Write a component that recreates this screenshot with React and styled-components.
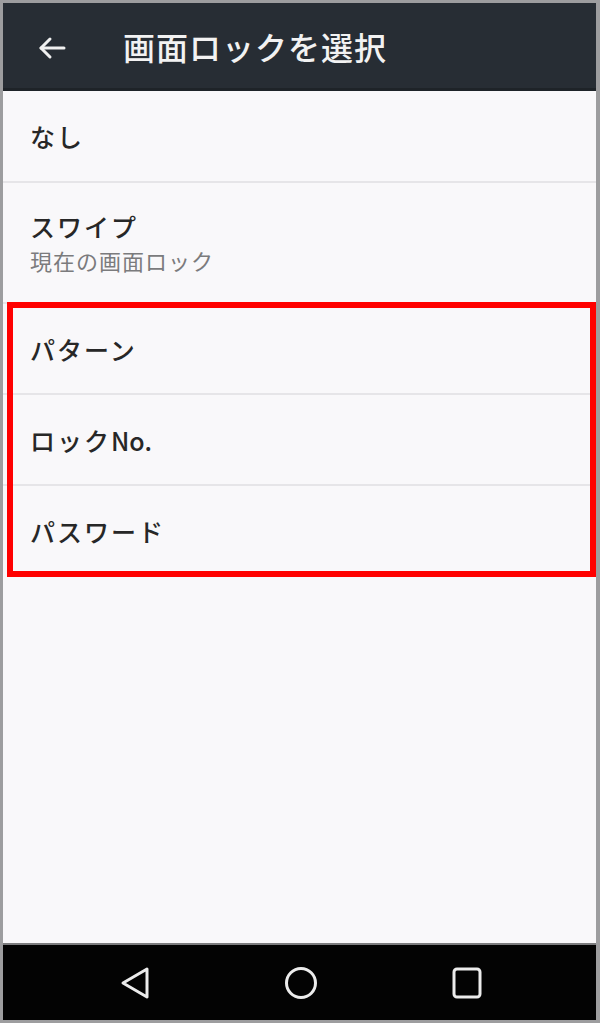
import React from 'react';
import styled, { createGlobalStyle } from 'styled-components';

const GlobalStyle = createGlobalStyle`
  html, body {
    margin: 0;
    padding: 0;
    background: #9d9d9f;
  }
  * {
    box-sizing: border-box;
  }
`;

const Screen = styled.div`
  width: 600px;
  height: 1023px;
  padding: 3px 4px 3px 3px;
  background: #9d9d9f;
  display: flex;
  flex-direction: column;
  font-family: "Noto Sans CJK JP", "Noto Sans", sans-serif;
`;

const Header = styled.header`
  height: 88px;
  flex-shrink: 0;
  background: #272d34;
  border-bottom: 3px solid #1e2328;
  display: flex;
  align-items: center;
  padding-left: 34px;
`;

const BackButton = styled.span`
  display: flex;
  width: 30px;
  height: 24px;
  margin-top: 4px;
`;

const Title = styled.h1`
  margin: 0 0 0 56px;
  font-size: 32px;
  font-weight: 500;
  letter-spacing: 1px;
  color: #f2f2f2;
  line-height: 1;
`;

const List = styled.main`
  flex: 1;
  background: #f9f8fa;
  display: flex;
  flex-direction: column;
`;

const Row = styled.div`
  height: ${(props) => props.h || 91}px;
  flex-shrink: 0;
  border-bottom: 2px solid ${(props) => (props.last ? 'transparent' : '#e6e5e8')};
  padding-left: 27px;
  display: flex;
  flex-direction: column;
  justify-content: center;
`;

const Label = styled.div`
  font-size: 25px;
  font-weight: 500;
  letter-spacing: 2px;
  line-height: 34px;
  color: #272727;
`;

const Latin = styled.span`
  letter-spacing: 0;
`;

const Sub = styled.div`
  font-size: 22px;
  letter-spacing: 1px;
  line-height: 34px;
  color: #7b7b7d;
`;

const Highlight = styled.section`
  position: relative;
  display: flex;
  flex-direction: column;

  &::after {
    content: '';
    position: absolute;
    top: -2px;
    left: 4px;
    right: 0;
    bottom: 0;
    border: 6px solid #ff0000;
    pointer-events: none;
  }
`;

const NavBar = styled.nav`
  height: 77px;
  flex-shrink: 0;
  background: #030303;
  border-top: 2px solid #7c7c7e;
  display: flex;
  align-items: center;
  justify-content: center;
  gap: 134px;
  padding-left: 2px;
`;

const NavIcon = styled.svg`
  width: 32px;
  height: 34px;
  fill: none;
  stroke: #ececec;
  stroke-width: 3;
  stroke-linejoin: round;
`;

const items = [
  { key: 'pattern', label: 'パターン' },
  { key: 'pin', label: 'ロック', latin: 'No.' },
  { key: 'password', label: 'パスワード', last: true },
];

const App = () => {
  return (
    <>
      <GlobalStyle />
      <Screen>
        <Header>
          <BackButton>
            <svg width="30" height="24" viewBox="0 0 30 24" fill="none" stroke="#f0f0f0" strokeWidth="3" strokeLinecap="round" strokeLinejoin="round">
              <path d="M27 12H4" />
              <path d="M13 3L4 12l9 9" />
            </svg>
          </BackButton>
          <Title>画面ロックを選択</Title>
        </Header>
        <List>
          <Row h={92}>
            <Label>なし</Label>
          </Row>
          <Row h={121}>
            <Label>スワイプ</Label>
            <Sub>現在の画面ロック</Sub>
          </Row>
          <Highlight>
            {items.map((item) => (
              <Row key={item.key} last={item.last}>
                <Label>
                  {item.label}
                  {item.latin && <Latin>{item.latin}</Latin>}
                </Label>
              </Row>
            ))}
          </Highlight>
        </List>
        <NavBar>
          <NavIcon viewBox="0 0 32 34">
            <path d="M28 3L4 17l24 14z" />
          </NavIcon>
          <NavIcon viewBox="0 0 32 34">
            <ellipse cx="16" cy="17" rx="14.5" ry="14.5" />
          </NavIcon>
          <NavIcon viewBox="0 0 32 34">
            <rect x="3" y="3" width="26" height="28" rx="3" />
          </NavIcon>
        </NavBar>
      </Screen>
    </>
  );
};

export default App;
